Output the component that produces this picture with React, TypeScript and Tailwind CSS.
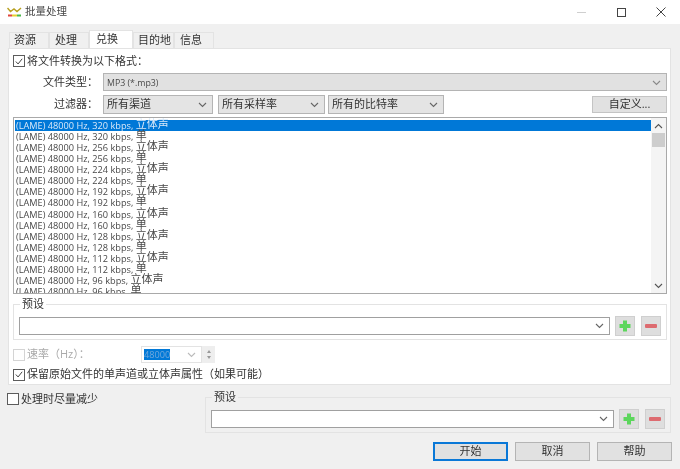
import React from "react";

const font = { fontFamily: '"Open Sans", "Noto Sans CJK SC", sans-serif' };

const Chevron = ({ color = "#666" }: { color?: string }) => (
  <svg width="9" height="6" viewBox="0 0 9 6" className="shrink-0">
    <path d="M1 1l3.5 3.5L8 1" fill="none" stroke={color} strokeWidth="1.1" />
  </svg>
);

const Check = () => (
  <svg width="11" height="11" viewBox="0 0 11 11">
    <path d="M2 5.5l2.5 2.7L9 2.5" fill="none" stroke="#444" strokeWidth="1.1" />
  </svg>
);

const Box = ({ checked, disabled }: { checked?: boolean; disabled?: boolean }) => (
  <span
    className={`flex h-[12px] w-[12px] shrink-0 items-center justify-center border bg-white ${
      disabled ? "border-[#d4d4d4]" : "border-[#5c5c5c]"
    }`}
  >
    {checked && <Check />}
  </span>
);

const Dropdown = ({ label, className }: { label: string; className: string }) => (
  <div
    className={`flex h-[19px] items-center justify-between border border-[#b4b4b4] bg-[#e4e4e4] pl-[3px] pr-[5px] text-[11px] text-[#333] ${className}`}
  >
    <span>{label}</span>
    <Chevron />
  </div>
);

const Combo = ({ className }: { className: string }) => (
  <div
    className={`flex h-[18px] items-center justify-end border border-[#a0a0a0] bg-white pr-[5px] ${className}`}
  >
    <Chevron />
  </div>
);

const IconBtn = ({ minus }: { minus?: boolean }) => (
  <div className="flex h-[20px] w-[20px] items-center justify-center border border-[#cfcfcf] bg-[#dedede]">
    {minus ? (
      <span className="h-[4px] w-[12px] rounded-[1px] bg-[#dd6b70]" />
    ) : (
      <svg width="12" height="12" viewBox="0 0 12 12">
        <path d="M4 0.5h4V4h3.5v4H8v3.5H4V8H0.5V4H4z" fill="#5cd65c" />
      </svg>
    )}
  </div>
);

const Preset = ({ className, combo }: { className: string; combo: string }) => (
  <fieldset className={`relative border border-[#e3e3e3] ${className}`}>
    <span className="absolute left-[6px] top-[-8.5px] bg-inherit px-[2px] text-[11px] leading-[14px] text-[#333]">
      预设
    </span>
    <div className="flex items-center pl-[5px] pr-[5px] pt-[11px]">
      <Combo className={combo} />
      <div className="ml-[5px] flex gap-[6px]">
        <IconBtn />
        <IconBtn minus />
      </div>
    </div>
  </fieldset>
);

const Btn = ({ label, primary }: { label: string; primary?: boolean }) => (
  <div
    className={`flex h-[19px] w-[75px] items-center justify-center bg-[#e1e1e1] text-[11px] text-[#333] ${
      primary ? "border-2 border-[#0a78d7]" : "border border-[#b4b4b4]"
    }`}
  >
    {label}
  </div>
);

const rates = ["320", "256", "224", "192", "160", "128", "112", "96"];
const rows = rates.flatMap((r) => [
  { r, c: "立体声" },
  { r, c: "单" },
]);

const tabs = [
  { t: "资源", c: "w-[40px] pl-[4px]" },
  { t: "处理", c: "w-[40px] pl-[5px]" },
  { t: "兑换", c: "w-[44px] pl-[6px] pb-[1px]", on: true },
  { t: "目的地", c: "w-[41px] pl-[4px]" },
  { t: "信息", c: "w-[40px] pl-[5px]" },
];

export default function App() {
  return (
    <div style={font} className="h-[469px] w-[680px] overflow-hidden bg-[#f0f0f0] blur-[0.35px]">
      {/* title bar */}
      <div className="flex h-[24px] items-center bg-white pl-[7px]">
        <svg width="15" height="10" viewBox="0 0 15 10">
          <path d="M0.5 1l3 3.5L7 2l3 2.5L14 1" fill="none" stroke="#b8a020" strokeWidth="1.4" />
          <path d="M1 8.5h4" stroke="#e0463c" strokeWidth="2" />
          <path d="M5 8.5h5" stroke="#e8d030" strokeWidth="2" />
          <path d="M10 8.5h4" stroke="#48b848" strokeWidth="2" />
        </svg>
        <span className="ml-[3px] text-[10.5px] text-[#444]">批量处理</span>
        <div className="ml-auto flex items-center">
          <span className="h-[1px] w-[9px] bg-[#cfcfcf]" />
          <span className="ml-[31px] h-[9px] w-[9px] border border-[#444]" />
          <svg width="10" height="10" viewBox="0 0 10 10" className="ml-[30px] mr-[14px]">
            <path d="M0.5 0.5l9 9M9.5 0.5l-9 9" stroke="#444" strokeWidth="1" />
          </svg>
        </div>
      </div>

      <div className="pl-[8px] pr-[9px] pt-[7px]">
        {/* tabs */}
        <div className="flex h-[17px] items-end pl-[1px]">
          {tabs.map((x) => (
            <div
              key={x.t}
              className={`flex items-center border border-b-0 border-[#e3e3e3] text-[11px] text-[#333] ${x.c} ${
                x.on ? "h-[18px] bg-white" : "h-[16px] bg-[#f0f0f0]"
              }`}
            >
              {x.t}
            </div>
          ))}
        </div>

        {/* panel */}
        <div className="h-[337px] border border-[#e3e3e3] bg-white pl-[4px] pr-[3px] pt-[6px]">
          <div className="flex h-[12px] items-center gap-[2px] text-[11px] text-[#333]">
            <Box checked />
            <span>将文件转换为以下格式：</span>
          </div>

          <div className="mt-[6px] flex items-center">
            <span className="w-[85px] text-right text-[11px] text-[#333]">文件类型：</span>
            <div className="ml-[5px] flex h-[18px] flex-1 items-center justify-between border border-[#b4b4b4] bg-[#e1e1e1] pl-[3px] pr-[5px] pt-[2px] text-[8.8px] leading-[12px] text-[#4a4a4a]">
              <span>MP3 (*.mp3)</span>
              <Chevron color="#888" />
            </div>
          </div>

          <div className="mt-[4px] flex items-center">
            <span className="w-[85px] text-right text-[11px] text-[#333]">过滤器：</span>
            <div className="ml-[5px] flex">
              <Dropdown label="所有渠道" className="w-[110px]" />
              <Dropdown label="所有采样率" className="ml-[5px] w-[107px]" />
              <Dropdown label="所有的比特率" className="ml-[3px] w-[116px]" />
            </div>
            <div className="ml-auto flex h-[17px] w-[75px] items-center justify-center border border-[#c4c4c4] bg-[#e1e1e1] text-[11px] text-[#333]">
              自定义...
            </div>
          </div>

          {/* list */}
          <div className="mt-[3px] flex h-[177px] border border-[#a9a9a9] bg-white">
            <div className="flex-1 overflow-hidden pl-[1px] pt-[2px]">
              {rows.map((x, i) => (
                <div
                  key={i}
                  className={`flex h-[11.13px] items-center whitespace-nowrap pl-[1px] text-[9.2px] leading-[10px] ${
                    i === 0 ? "bg-[#0078d7] text-[#d8e8f8]" : "text-[#484848]"
                  }`}
                >
                  <span>(LAME) 48000 Hz, {x.r} kbps,&nbsp;</span>
                  <span className="relative top-[-2px] text-[11px] leading-[10px]">{x.c}</span>
                </div>
              ))}
            </div>
            <div className="flex w-[15px] flex-col items-center justify-between bg-[#f4f4f4]">
              <div className="flex h-[15px] w-full items-center justify-center">
                <span className="rotate-180">
                  <Chevron color="#555" />
                </span>
              </div>
              <div className="absolute mt-[15px] h-[14px] w-[13px] bg-[#cdcdcd]" />
              <div className="flex h-[15px] w-full items-center justify-center">
                <Chevron color="#555" />
              </div>
            </div>
          </div>

          <Preset className="mt-[10px] h-[36px] bg-white" combo="flex-1" />

          <div className="mt-[6px] flex h-[17px] items-center">
            <Box disabled />
            <span className="ml-[2px] w-[114px] text-[11px] text-[#aaa]">速率（Hz）：</span>
            <div className="flex h-[17px] w-[61px] items-center justify-between border border-[#e3e3e3] pl-[2px] pr-[5px]">
              <span className="bg-[#0078d7] text-[9.2px] leading-[11px] text-[#6fa8dc]">48000</span>
              <Chevron color="#bbb" />
            </div>
            <div className="flex h-[17px] w-[13px] flex-col items-center justify-center gap-[3px] bg-[#eeeeee]">
              <span className="h-0 w-0 border-x-[2.5px] border-b-[3px] border-x-transparent border-b-[#999]" />
              <span className="h-0 w-0 border-x-[2.5px] border-t-[3px] border-x-transparent border-t-[#999]" />
            </div>
          </div>

          <div className="mt-[5px] flex h-[13px] items-center gap-[2px] text-[11px] text-[#333]">
            <Box checked />
            <span>保留原始文件的单声道或立体声属性（如果可能）</span>
          </div>
        </div>

        {/* bottom */}
        <div className="relative mt-[8px] flex items-start">
          <div className="ml-[-1px] flex h-[12px] items-center gap-[2px] text-[11px] text-[#333]">
            <Box />
            <span>处理时尽量减少</span>
          </div>
          <Preset className="ml-auto mt-[4px] h-[36px] w-[466px] bg-[#f0f0f0]" combo="w-[403px]" />
        </div>

        <div className="mr-[-1px] mt-[9px] flex justify-end gap-[7px]">
          <Btn label="开始" primary />
          <Btn label="取消" />
          <Btn label="帮助" />
        </div>
      </div>
    </div>
  );
}
